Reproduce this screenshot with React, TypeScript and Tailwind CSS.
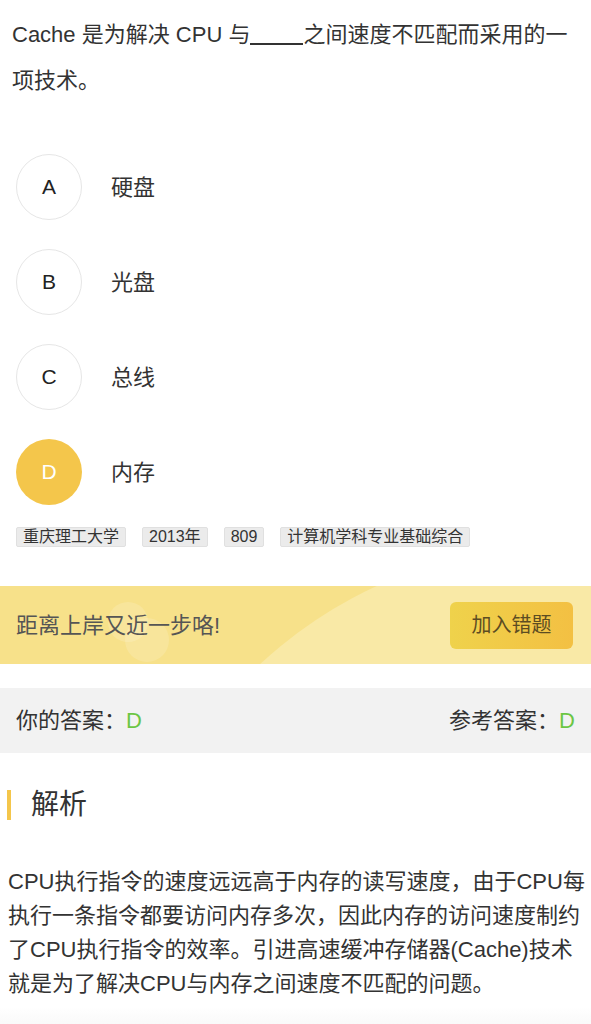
const options = [
  { key: "A", text: "硬盘" },
  { key: "B", text: "光盘" },
  { key: "C", text: "总线" },
  { key: "D", text: "内存", picked: true },
];

const tags = ["重庆理工大学", "2013年", "809", "计算机学科专业基础综合"];

export default function App() {
  return (
    <div className="min-h-screen bg-white font-['Liberation_Sans','Noto_Sans_CJK_SC',sans-serif] text-[#333]">
      <p className="px-3 pt-3 text-[22px] leading-[46px]">
        Cache 是为解决 CPU 与
        <span className="inline-block h-[2px] w-[53px] bg-[#333] align-[-3px]" />
        之间速度不匹配而采用的一项技术。
      </p>

      <div className="mt-[50px] flex flex-col gap-[29px] pl-4">
        {options.map((o) => (
          <div key={o.key} className="flex flex-row items-center">
            <div
              className={`flex h-[66px] w-[66px] items-center justify-center rounded-full text-[21px] ${
                o.picked ? "bg-[#f4c64b] text-white" : "border border-[#e6e6e6] text-[#222]"
              }`}
            >
              {o.key}
            </div>
            <span className="ml-[29px] text-[22px]">{o.text}</span>
          </div>
        ))}
      </div>

      <div className="mt-[22px] flex flex-row gap-4 pl-4">
        {tags.map((t) => (
          <span
            key={t}
            className="h-5 rounded-[2px] border border-[#e0e0e0] bg-[#ebebeb] px-1.5 text-[16px] leading-[18px] text-[#333]"
          >
            {t}
          </span>
        ))}
      </div>

      <div className="relative mt-[39px] flex h-[78px] flex-row items-center justify-between overflow-hidden bg-[#f7e18a] pl-4 pr-[18px]">
        <div className="absolute left-[120px] top-[-40px] h-[880px] w-[880px] rounded-full bg-[#f9e9a6]" />
        <div className="absolute left-[108px] top-[16px] h-[40px] w-[40px] rounded-full bg-white/15" />
        <div className="absolute left-[125px] top-[32px] h-[44px] w-[44px] rounded-full bg-white/15" />
        <span className="relative text-[22px] text-[#555]">距离上岸又近一步咯!</span>
        <button className="relative h-[47px] w-[123px] rounded-[6px] bg-gradient-to-r from-[#efd24b] to-[#f3c043] text-[20px] text-[#5c4c22]">
          加入错题
        </button>
      </div>

      <div className="mt-6 flex h-[65px] flex-row items-center justify-between bg-[#f2f2f2] px-4 text-[22px]">
        <span>
          你的答案：<span className="text-[#6cc644]">D</span>
        </span>
        <span>
          参考答案：<span className="text-[#6cc644]">D</span>
        </span>
      </div>

      <div className="mt-[37px] flex flex-row items-center pl-[7px]">
        <span className="h-[30px] w-1 bg-[#f4c64b]" />
        <span className="ml-5 text-[28px] leading-[30px] text-[#333]">解析</span>
      </div>

      <p className="mt-[45px] pl-2 text-[22px] leading-[34px] text-[#333]">
        CPU执行指令的速度远远高于内存的读写速度，由于CPU每执行一条指令都要访问内存多次，因此内存的访问速度制约了CPU执行指令的效率。引进高速缓冲存储器(Cache)技术就是为了解决CPU与内存之间速度不匹配的问题。
      </p>

      <div className="mt-[6px] h-[40px] bg-gradient-to-b from-white to-[#f2f2f2]" />
    </div>
  );
}
